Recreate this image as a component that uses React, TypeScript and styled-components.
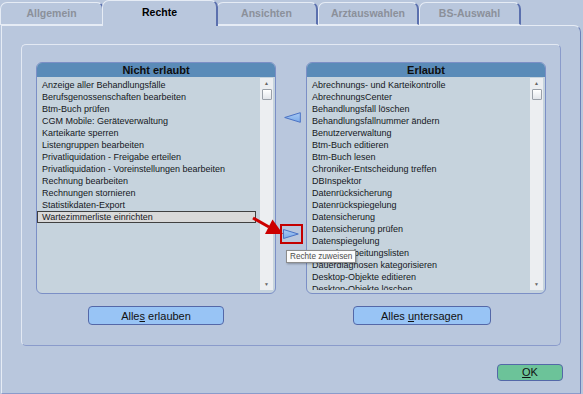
import React from "react";
import styled, { createGlobalStyle } from "styled-components";

const GlobalStyle = createGlobalStyle`
  html, body {
    margin: 0;
    padding: 0;
    background: #b9c7dd;
  }
  body {
    font-family: "Liberation Sans", Arial, sans-serif;
  }
`;

const Window = styled.div`
  width: 583px;
  height: 394px;
  display: flex;
  flex-direction: column;
  background: #b9c7dd;
  overflow: hidden;
  font-family: "Liberation Sans", Arial, sans-serif;
`;

const TabBar = styled.div`
  display: flex;
  align-items: flex-end;
  height: 25px;
  flex: none;
  position: relative;
  z-index: 2;
`;

const Tab = styled.div<{ $active?: boolean; $w: number }>`
  box-sizing: border-box;
  width: ${(p) => p.$w}px;
  height: ${(p) => (p.$active ? 26 : 23)}px;
  margin: 0 ${(p) => (p.$active ? -2 : 0)}px ${(p) => (p.$active ? -1 : 0)}px;
  display: flex;
  align-items: center;
  justify-content: center;
  padding-bottom: ${(p) => (p.$active ? 3 : 1)}px;
  border-style: solid;
  border-width: 1px 2px ${(p) => (p.$active ? 0 : 1)}px 1px;
  border-color: #e6ecf5 #5b70ae #e6ecf5 #e6ecf5;
  border-radius: 7px 7px 0 0;
  background: #b9c7dd;
  font-weight: bold;
  font-size: 10.5px;
  color: ${(p) => (p.$active ? "#000" : "#8b909a")};
  position: relative;
  z-index: ${(p) => (p.$active ? 2 : 1)};
`;

const Page = styled.div`
  flex: 1;
  box-sizing: border-box;
  margin-left: 1px;
  width: 580px;
  border-style: solid;
  border-width: 1px 1px 1px 1px;
  border-color: #e6ecf5 #6d80b8 #8a9bcb #e6ecf5;
  border-radius: 0 7px 0 0;
  display: flex;
  flex-direction: column;
  padding: 18px 0 0 19px;
`;

const GroupBox = styled.div`
  width: 540px;
  height: 302px;
  box-sizing: border-box;
  border: 1px solid;
  border-color: #e3e9f3 #8a9bcb #8a9bcb #e3e9f3;
  border-radius: 5px;
  padding: 17px 14px 0 14px;
  display: grid;
  grid-template-columns: 240px 30px 1fr;
  grid-template-rows: 232px 19px;
  row-gap: 12px;
`;

const Panel = styled.div`
  display: flex;
  flex-direction: column;
  border: 1px solid #7b8fc6;
  border-radius: 6px;
  background: #c6d3dd;
  overflow: hidden;
  min-height: 0;
`;

const PanelHeader = styled.div`
  flex: none;
  height: 14px;
  background: #5a8bb8;
  font-weight: bold;
  font-size: 11px;
  line-height: 14px;
  text-align: center;
  color: #0d0d0d;
`;

const PanelBody = styled.div`
  flex: 1;
  display: flex;
  min-height: 0;
  padding: 1px 2px 3px 0;
`;

const List = styled.div`
  flex: 1;
  overflow: hidden;
  padding: 1px 4px 0 0;
`;

const Item = styled.div<{ $selected?: boolean }>`
  box-sizing: border-box;
  height: 12px;
  line-height: 10px;
  font-size: 9px;
  padding-left: 4px;
  white-space: nowrap;
  color: #15171c;
  border: 1px solid ${(p) => (p.$selected ? "#404040" : "transparent")};
  background: ${(p) => (p.$selected ? "#d9d9d9" : "transparent")};
`;

const ScrollTrack = styled.div`
  width: 13px;
  flex: none;
  background: #eceef1;
  display: flex;
  flex-direction: column;
  align-items: center;
`;

const ScrollArrow = styled.div`
  height: 11px;
  line-height: 11px;
  font-size: 5px;
  color: #666;
`;

const Thumb = styled.div`
  width: 10px;
  height: 11px;
  box-sizing: border-box;
  border: 1px solid #9aa0a8;
  border-radius: 1px;
  background: linear-gradient(#ffffff, #e2e5ea);
`;

const TrackSpacer = styled.div`
  flex: 1;
`;

const MidColumn = styled.div`
  position: relative;
  display: flex;
  flex-direction: column;
  align-items: center;
  padding-top: 50px;
`;

const MoveArrow = styled.svg`
  display: block;
  margin-left: 3px;
`;

const RedFrame = styled.div`
  margin-top: 101px;
  width: 23px;
  height: 20px;
  box-sizing: border-box;
  border: 2px solid #c40000;
  display: flex;
  align-items: center;
  justify-content: center;
`;

const Pointer = styled.svg`
  position: absolute;
  left: -26px;
  top: 152px;
`;

const Tooltip = styled.div`
  position: absolute;
  left: 10px;
  top: 188px;
  z-index: 5;
  height: 13px;
  box-sizing: border-box;
  padding: 0 3px;
  line-height: 11px;
  font-size: 8.2px;
  white-space: nowrap;
  color: #4d4d4d;
  background: #fbfbfb;
  border: 1px solid #8c8c8c;
  box-shadow: 1px 1px 2px rgba(0, 0, 0, 0.3);
`;

const ActionButton = styled.button<{ $w: number; $shift?: number }>`
  justify-self: center;
  width: ${(p) => p.$w}px;
  height: 19px;
  margin-right: ${(p) => p.$shift ?? 0}px;
  padding: 0;
  border: 1px solid #5468a8;
  border-radius: 4px;
  background: #98c4f5;
  font-family: "Liberation Sans", Arial, sans-serif;
  font-size: 11px;
  color: #111;
`;

const Footer = styled.div`
  display: flex;
  justify-content: flex-end;
  padding: 18px 17px 0 0;
`;

const OkButton = styled.button`
  width: 66px;
  height: 17px;
  padding: 0;
  border: 1px solid #5468a8;
  border-radius: 4px;
  background: #6cc399;
  font-family: "Liberation Sans", Arial, sans-serif;
  font-size: 11px;
  line-height: 15px;
  color: #111;
`;

const notAllowed = [
  "Anzeige aller Behandlungsfälle",
  "Berufsgenossenschaften bearbeiten",
  "Btm-Buch prüfen",
  "CGM Mobile: Geräteverwaltung",
  "Karteikarte sperren",
  "Listengruppen bearbeiten",
  "Privatliquidation - Freigabe erteilen",
  "Privatliquidation - Voreinstellungen bearbeiten",
  "Rechnung bearbeiten",
  "Rechnungen stornieren",
  "Statistikdaten-Export",
  "Wartezimmerliste einrichten",
];

const allowed = [
  "Abrechnungs- und Karteikontrolle",
  "AbrechnungsCenter",
  "Behandlungsfall löschen",
  "Behandlungsfallnummer ändern",
  "Benutzerverwaltung",
  "Btm-Buch editieren",
  "Btm-Buch lesen",
  "Chroniker-Entscheidung treffen",
  "DBInspektor",
  "Datenrücksicherung",
  "Datenrückspiegelung",
  "Datensicherung",
  "Datensicherung prüfen",
  "Datenspiegelung",
  "Datenbearbeitungslisten",
  "Dauerdiagnosen kategorisieren",
  "Desktop-Objekte editieren",
  "Desktop-Objekte löschen",
];

function RightsList({ title, items, selected }: { title: string; items: string[]; selected?: string }) {
  return (
    <Panel>
      <PanelHeader>{title}</PanelHeader>
      <PanelBody>
        <List>
          {items.map((it) => (
            <Item key={it} $selected={it === selected}>
              {it}
            </Item>
          ))}
        </List>
        <ScrollTrack>
          <ScrollArrow>▲</ScrollArrow>
          <Thumb />
          <TrackSpacer />
          <ScrollArrow>▼</ScrollArrow>
        </ScrollTrack>
      </PanelBody>
    </Panel>
  );
}

export default function App() {
  return (
    <Window>
      <GlobalStyle />
      <TabBar>
        <Tab $w={104}>Allgemein</Tab>
        <Tab $w={116} $active>
          Rechte
        </Tab>
        <Tab $w={102}>Ansichten</Tab>
        <Tab $w={101}>Arztauswahlen</Tab>
        <Tab $w={102}>BS-Auswahl</Tab>
      </TabBar>
      <Page>
        <GroupBox>
          <RightsList title="Nicht erlaubt" items={notAllowed} selected="Wartezimmerliste einrichten" />
          <MidColumn>
            <MoveArrow width="17" height="11" viewBox="0 0 17 11">
              <defs>
                <linearGradient id="ag" x1="0" y1="0" x2="0" y2="1">
                  <stop offset="0" stopColor="#a9cbf5" />
                  <stop offset="1" stopColor="#7aa9e8" />
                </linearGradient>
              </defs>
              <polygon points="0.7,5.5 16.3,0.7 16.3,10.3" fill="url(#ag)" stroke="#4a72c4" strokeWidth="1" />
            </MoveArrow>
            <RedFrame>
              <svg width="16" height="10" viewBox="0 0 16 10">
                <polygon points="0.5,0.5 15.3,5 0.5,9.5" fill="url(#ag)" stroke="#4a72c4" strokeWidth="1" />
              </svg>
            </RedFrame>
            <Pointer width="36" height="24" viewBox="0 0 36 24">
              <line x1="3" y1="4" x2="19" y2="13" stroke="#cc0000" strokeWidth="3" />
              <polygon points="33,20 15,20 22.5,5.5" fill="#cc0000" />
            </Pointer>
            <Tooltip>Rechte zuweisen</Tooltip>
          </MidColumn>
          <RightsList title="Erlaubt" items={allowed} />
          <ActionButton $w={136}>
            Alle<u>s</u> erlauben
          </ActionButton>
          <span />
          <ActionButton $w={138} $shift={8}>
            Alles <u>u</u>ntersagen
          </ActionButton>
        </GroupBox>
        <Footer>
          <OkButton>
            <u>O</u>K
          </OkButton>
        </Footer>
      </Page>
    </Window>
  );
}
